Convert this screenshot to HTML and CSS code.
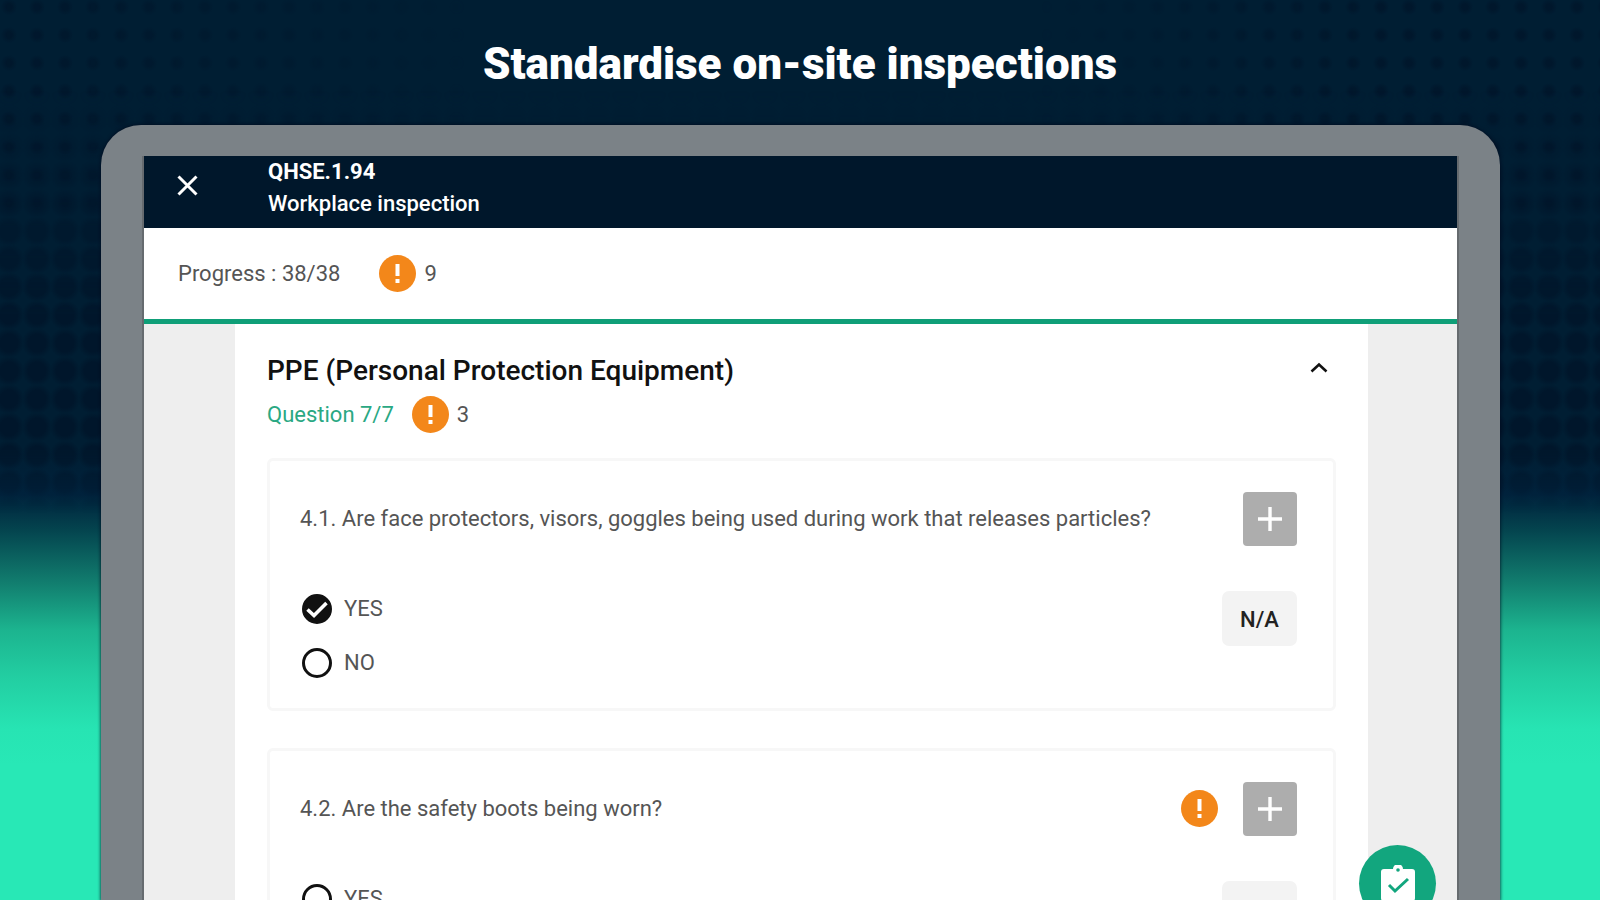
FILE: index.html
```
<!DOCTYPE html>
<html lang="en">
<head>
    <meta charset="UTF-8">
    <meta name="viewport" content="width=device-width, initial-scale=1.0">
    <title>Standardise on-site inspections</title>
    <link rel="stylesheet" href="styles.css">
</head>
<body>
    <!-- Shared icons -->
    <svg class="sprite" aria-hidden="true">
        <symbol id="alert" viewBox="0 0 37 37">
            <circle cx="18.5" cy="18.5" r="18.5" fill="#f3871a"/>
            <path d="M16.5 9h4v12h-4zM16.5 24h4v4h-4z" fill="#fff"/>
        </symbol>
        <symbol id="plus" viewBox="0 0 24 24">
            <path d="M12 0v24M0 12h24" stroke="#fff" stroke-width="3.4"/>
        </symbol>
    </svg>

    <h1 class="headline">Standardise on-site inspections</h1>

    <main class="tablet">
        <div class="screen">
            <header class="topbar">
                <button class="close" aria-label="Close">
                    <svg width="21" height="21" viewBox="0 0 21 21"><path d="M1.5 1.5l18 18M19.5 1.5l-18 18" stroke="#fff" stroke-width="3"/></svg>
                </button>
                <div class="topbar-text">
                    <div class="code">QHSE.1.94</div>
                    <div class="name">Workplace inspection</div>
                </div>
            </header>

            <div class="progress">
                <span class="progress-text">Progress : 38/38</span>
                <svg class="alert"><use href="#alert"/></svg>
                <span>9</span>
            </div>

            <div class="content">
                <section class="group">
                    <div class="group-head">
                        <h2>PPE (Personal Protection Equipment)</h2>
                        <button class="toggle" aria-label="Collapse">
                            <svg width="18" height="11" viewBox="0 0 18 11"><path d="M1.5 9.5L9 2.5l7.5 7" fill="none" stroke="#111" stroke-width="2.6"/></svg>
                        </button>
                    </div>
                    <div class="group-meta">
                        <span class="count">Question 7/7</span>
                        <svg class="alert"><use href="#alert"/></svg>
                        <span>3</span>
                    </div>

                    <!-- Question 4.1 -->
                    <article class="card">
                        <div class="card-top">
                            <p>4.1. Are face protectors, visors, goggles being used during work that releases particles?</p>
                            <button class="add" aria-label="Add"><svg width="24" height="24"><use href="#plus"/></svg></button>
                        </div>
                        <div class="card-body">
                            <div class="options">
                                <label><input type="radio" name="q41" checked>YES</label>
                                <label><input type="radio" name="q41">NO</label>
                            </div>
                            <button class="na">N/A</button>
                        </div>
                    </article>

                    <!-- Question 4.2 -->
                    <article class="card">
                        <div class="card-top">
                            <p>4.2. Are the safety boots being worn?</p>
                            <svg class="alert"><use href="#alert"/></svg>
                            <button class="add" aria-label="Add"><svg width="24" height="24"><use href="#plus"/></svg></button>
                        </div>
                        <div class="card-body">
                            <div class="options">
                                <label><input type="radio" name="q42">YES</label>
                                <label><input type="radio" name="q42">NO</label>
                            </div>
                            <button class="na">N/A</button>
                        </div>
                    </article>
                </section>
            </div>
        </div>

        <!-- Floating submit button -->
        <button class="fab" aria-label="Submit inspection">
            <svg width="36" height="38" viewBox="0 0 36 38">
                <path d="M4 4h9a5 5 0 0 1 10 0h9a3 3 0 0 1 3 3v26a3 3 0 0 1-3 3H4a3 3 0 0 1-3-3V7a3 3 0 0 1 3-3z" fill="#fff"/>
                <circle cx="18" cy="5" r="1.8" fill="#12a67e"/>
                <path d="M9 20l6 6 13-12" fill="none" stroke="#12a67e" stroke-width="3"/>
            </svg>
        </button>
    </main>
</body>
</html>
```
FILE: styles.css
```
* {
    box-sizing: border-box;
}

body {
    margin: 0;
    height: 100vh;
    overflow: hidden;
    display: flex;
    flex-direction: column;
    position: relative;
    font-family: Roboto, "Liberation Sans", sans-serif;
    font-size: 22px;
    line-height: 32px;
    color: #555;
    background: linear-gradient(#001e33 0, #001e33 50%, #00223c 55%, #04454f 59%, #128070 65%, #1cb48f 70%, #22cda1 75%, #27e4b3 81%, #28e8b6 85%);
}

/* Dot grid: small dots at the top, larger ones further down */
body::before,
body::after {
    content: "";
    position: absolute;
    inset: 0;
    z-index: -1;
    background-size: 28px 28px;
    background-position: -5px -7px;
}

body::before {
    background-image: radial-gradient(circle, #00162b 3px, transparent 8px);
    mask-image: linear-gradient(to right, #000, transparent 30%, transparent 65%, #000 85%);
    height: 24%;
    opacity: 0.8;
}

body::after {
    background-image: radial-gradient(circle, #00152a 9px, transparent 15px);
    mask-image: linear-gradient(transparent 10%, #000 35%, #000 50%, transparent 57%);
    opacity: 0.8;
}

.sprite {
    position: absolute;
    width: 0;
    height: 0;
}

.headline {
    margin: 0;
    padding: 40px 0 37px;
    font-size: 44px;
    line-height: 48px;
    font-weight: 900;
    color: #fff;
    text-align: center;
}

/* Device */
.tablet {
    flex: 1;
    min-height: 0;
    position: relative;
    margin: 0 100px 0 101px;
    padding: 31px 41px 0;
    background: #7b8287;
    border-radius: 40px 40px 0 0;
    box-shadow: 0 0 3px 1px rgba(0, 10, 30, 0.6);
}

.screen {
    height: 100%;
    overflow: hidden;
    background: #fff;
    border: solid #666b6f;
    border-width: 0 2px;
}

button {
    border: 0;
    padding: 0;
    background: none;
    font: inherit;
    color: inherit;
    cursor: pointer;
}

button svg {
    display: block;
}

.topbar {
    display: flex;
    align-items: flex-start;
    height: 72px;
    background: #00172b;
    color: #fff;
}

.close {
    width: 124px;
    padding: 19px 33px;
}

.topbar-text {
    font-weight: 500;
}

.code {
    font-weight: 700;
}

.progress {
    display: flex;
    align-items: center;
    height: 96px;
    padding: 0 34px;
    border-bottom: 5px solid #0f9f78;
}

.alert {
    flex: none;
    width: 37px;
    height: 37px;
    margin-right: 8px;
}

.progress-text {
    margin-right: 39px;
}

.content {
    padding: 0 89px 0 91px;
    background: #eee;
}

.group {
    padding: 29px 32px;
    background: #fff;
}

.group-head {
    display: flex;
    justify-content: space-between;
}

.group-head h2 {
    margin: 0;
    font-size: 28px;
    line-height: 36px;
    font-weight: 500;
    color: #111;
}

.toggle {
    padding: 0 8px;
    margin-bottom: 8px;
}

.group-meta {
    display: flex;
    align-items: center;
    margin: 7px 0 25px;
}

.count {
    margin-right: 18px;
    color: #2aa883;
}

/* Question cards */
.card {
    margin-bottom: 37px;
    padding: 30px 36px 18px 30px;
    border: 3px solid #f7f7f7;
    border-radius: 6px;
}

.card-top {
    display: flex;
    align-items: center;
    height: 55px;
    margin-bottom: 36px;
}

.card-top p {
    flex: 1;
    margin: 0;
}

.card-top .alert {
    margin-right: 25px;
}

.add {
    display: flex;
    align-items: center;
    justify-content: center;
    width: 54px;
    height: 54px;
    border-radius: 4px;
    background: #adadad;
}

.card-body {
    display: flex;
    justify-content: space-between;
}

.options label {
    display: flex;
    align-items: center;
    height: 54px;
}

.options input {
    appearance: none;
    width: 30px;
    height: 30px;
    margin: 0 12px 0 2px;
    border: 3px solid #111;
    border-radius: 50%;
}

.options input:checked {
    background: #111 url("data:image/svg+xml,%3Csvg xmlns='http://www.w3.org/2000/svg' viewBox='0 0 24 24'%3E%3Cpath d='M2.500 12.500l6.500 6L21.500 6' fill='none' stroke='white' stroke-width='3.600'/%3E%3C/svg%3E") center / 24px no-repeat;
}

.na {
    width: 75px;
    height: 55px;
    margin-top: 9px;
    padding-top: 2px;
    border-radius: 7px;
    background: #f3f3f3;
    color: #222;
    font-weight: 500;
}

.fab {
    position: absolute;
    right: 64px;
    bottom: -22px;
    display: flex;
    align-items: center;
    justify-content: center;
    width: 77px;
    height: 77px;
    border-radius: 50%;
    background: #12a67e;
}
```
